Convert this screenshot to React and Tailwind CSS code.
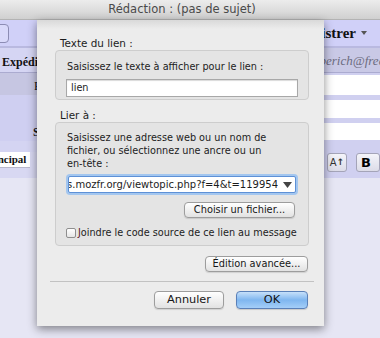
import React from 'react';

const sans = "font-['DejaVu_Sans','Liberation_Sans',sans-serif]";
const serif = "font-['Liberation_Serif','DejaVu_Serif',serif]";

function MacButton({ children, className = '' }) {
  return (
    <div
      className={`flex items-center justify-center rounded-[4px] border border-[#9d9d9d] bg-linear-to-b from-white to-[#e2e2e2] shadow-[0_1px_1px_rgba(0,0,0,0.12)] text-[#161616] whitespace-nowrap ${className}`}
    >
      {children}
    </div>
  );
}

function ComposeWindow() {
  return (
    <div className={`flex flex-col ${serif}`}>
      {/* main toolbar */}
      <div className="h-[28px] flex items-center justify-between bg-[#d0d0f8] border-b-2 border-[#b9b9e0]">
        <div className="w-[21px] h-[19px] -ml-[12px] rounded-[4px] border border-[#8c8cb4] bg-[#d9d9fa]" />
        <div className="flex items-center gap-[5px] pr-[13px] text-[15px] font-bold text-[#111]">
          <span>Enregistrer</span>
          <svg width="6" height="4" viewBox="0 0 6 4">
            <path d="M0 0 L6 0 L3 4 Z" fill="#555" />
          </svg>
        </div>
      </div>

      {/* header fields */}
      <div className="flex justify-between">
        <div className="w-[40px] flex flex-col overflow-hidden whitespace-nowrap text-[12px] text-[#111]">
          <div className="h-[25px] flex items-center pt-[3px] pl-[2px] bg-[#d5d5f3] border-b border-[#ababd0] font-bold">
            Expéditeur :
          </div>
          <div className="h-[22px] flex items-center pt-[3px] pl-[34px] bg-[#c6c6e2]">Pour :</div>
          <div className="h-[46px] flex flex-col bg-[#cfcff1]">
            <div className="h-[28px]" />
            <div className="h-[18px] flex items-center pl-[33px] font-bold">Sujet :</div>
          </div>
          <div className="h-[11px] bg-[#d4d4f2]" />
          <div className="h-[26px] flex items-start bg-[#d8d8f2]">
            <div className="h-[16px] w-[30px] flex items-center overflow-hidden bg-white border-b border-[#b8b8cc] text-[11px] font-bold">
              <span className="-ml-[17px]">Principal</span>
            </div>
          </div>
        </div>
        <div className="w-[58px] flex flex-col overflow-hidden whitespace-nowrap">
          <div className="h-[25px] flex items-center pt-[2px] bg-[#c9c9e6] border-b border-[#ababd0] italic text-[13px] text-[#6c6c80]">
            <span className="-ml-[22px]">lamberich@free.fr</span>
          </div>
          <div className="h-[2px] bg-[#d0d0f0]" />
          <div className="h-[20px] bg-white" />
          <div className="h-[5px] bg-[#d0d0f0]" />
          <div className="h-[18px] bg-white" />
          <div className="h-[5px] bg-[#d0d0f0]" />
          <div className="h-[17px] bg-white" />
          <div className="h-[38px] flex items-start pt-[13px] gap-[9px] pl-[5px] bg-[#d0d0f0]">
            <div className="w-[26px] h-[19px] flex items-center justify-center rounded-[3px] border border-[#a4a4b8] bg-linear-to-b from-[#f4f4fa] to-[#dcdce8] text-[10px] text-[#333] font-['DejaVu_Sans',sans-serif]">
              A<span className="text-[9px] font-bold">↑</span>
            </div>
            <div className="w-[30px] h-[19px] flex items-center pl-[4px] rounded-[3px] border border-[#a4a4b8] bg-linear-to-b from-[#f4f4fa] to-[#dcdce8] text-[13px] font-bold font-['DejaVu_Sans',sans-serif]">
              B
            </div>
          </div>
        </div>
      </div>
    </div>
  );
}

function LinkDialog() {
  return (
    <div
      className={`absolute left-[37px] top-[20px] w-[287px] h-[306px] flex flex-col pl-[18px] pr-[15px] pt-[16px] bg-[linear-gradient(#d9d9d9,#ececec_9px)] shadow-[0_3px_9px_rgba(0,0,0,0.45)] text-[#1c1c1c] ${sans}`}
    >
      <div className="pl-[5px] text-[10.4px] leading-[14px]">Texte du lien :</div>
      <div className="h-[50px] flex flex-col rounded-[4px] border border-[#cdcdcd] bg-[#e4e4e4] px-[10px] pt-[10px]">
        <div className="pl-[1px] text-[9.7px] leading-[12px]">Saisissez le texte à afficher pour le lien :</div>
        <div className="mt-[6px] h-[18px] flex items-center px-[4px] border border-[#a8a8a8] bg-white text-[9.7px] shadow-[inset_0_1px_1px_rgba(0,0,0,0.15)]">
          lien
        </div>
      </div>

      <div className="mt-[8px] pl-[5px] text-[10.4px] leading-[14px]">Lier à :</div>
      <div className="h-[124px] flex flex-col rounded-[4px] border border-[#cdcdcd] bg-[#e4e4e4] px-[10px] pt-[8px]">
        <div className="pl-[1px] text-[9.7px] leading-[13px]">
          Saisissez une adresse web ou un nom de
          <br />
          fichier, ou sélectionnez une ancre ou un
          <br />
          en-tête :
        </div>
        <div className="mt-[6px] mx-[2px] h-[17px] flex items-center rounded-[2px] border border-[#5d90d6] bg-white shadow-[0_0_0_2px_#a3c6ef]">
          <div className="flex-1 flex justify-end overflow-hidden whitespace-nowrap text-[10px]">
            forums.mozfr.org/viewtopic.php?f=4&amp;t=119954
          </div>
          <svg className="ml-[5px] mr-[3px] shrink-0" width="9" height="6" viewBox="0 0 9 6">
            <path d="M0 0 L9 0 L4.5 6 Z" fill="#444" />
          </svg>
        </div>
        <MacButton className="mt-[9px] mr-[3px] self-end w-[111px] h-[16px] text-[9.8px]">
          Choisir un fichier...
        </MacButton>
        <div className="mt-[9px] h-[12px] flex items-center gap-[2px]">
          <div className="w-[10px] h-[10px] rounded-[2px] border border-[#8e8e8e] bg-linear-to-b from-white to-[#e6e6e6]" />
          <span className="text-[9.7px] whitespace-nowrap">
            <span className="text-[#5a1424]">J</span>oindre le code source de ce lien au message
          </span>
        </div>
      </div>

      <MacButton className="mt-[10px] mr-[1px] self-end w-[103px] h-[16px] text-[9.8px]">
        Édition avancée...
      </MacButton>

      <div className="mt-[9px] -ml-[5px] w-[264px] h-px bg-[#c2c2c2]" />

      <div className="mt-[9px] mr-[1px] flex justify-end gap-[12px]">
        <MacButton className="w-[70px] h-[18px] text-[11.3px]">Annuler</MacButton>
        <div className="w-[72px] h-[18px] flex items-center justify-center rounded-[4px] border border-[#5a80b8] bg-linear-to-b from-[#c6e0fa] via-[#7fb6ef] to-[#a4cef8] shadow-[0_1px_1px_rgba(0,0,0,0.15)] text-[11.3px] text-[#111]">
          OK
        </div>
      </div>
    </div>
  );
}

export default function App() {
  return (
    <div className="w-[380px] h-[338px] relative overflow-hidden bg-[#e6e6f4]">
      <div
        className={`h-[20px] flex items-center justify-center pr-[16px] bg-linear-to-b from-[#ececec] to-[#d0d0d0] border-b border-[#b3b3b3] text-[11.5px] text-[#4a4a4a] ${sans}`}
      >
        Rédaction : (pas de sujet)
      </div>
      <ComposeWindow />
      <LinkDialog />
    </div>
  );
}
